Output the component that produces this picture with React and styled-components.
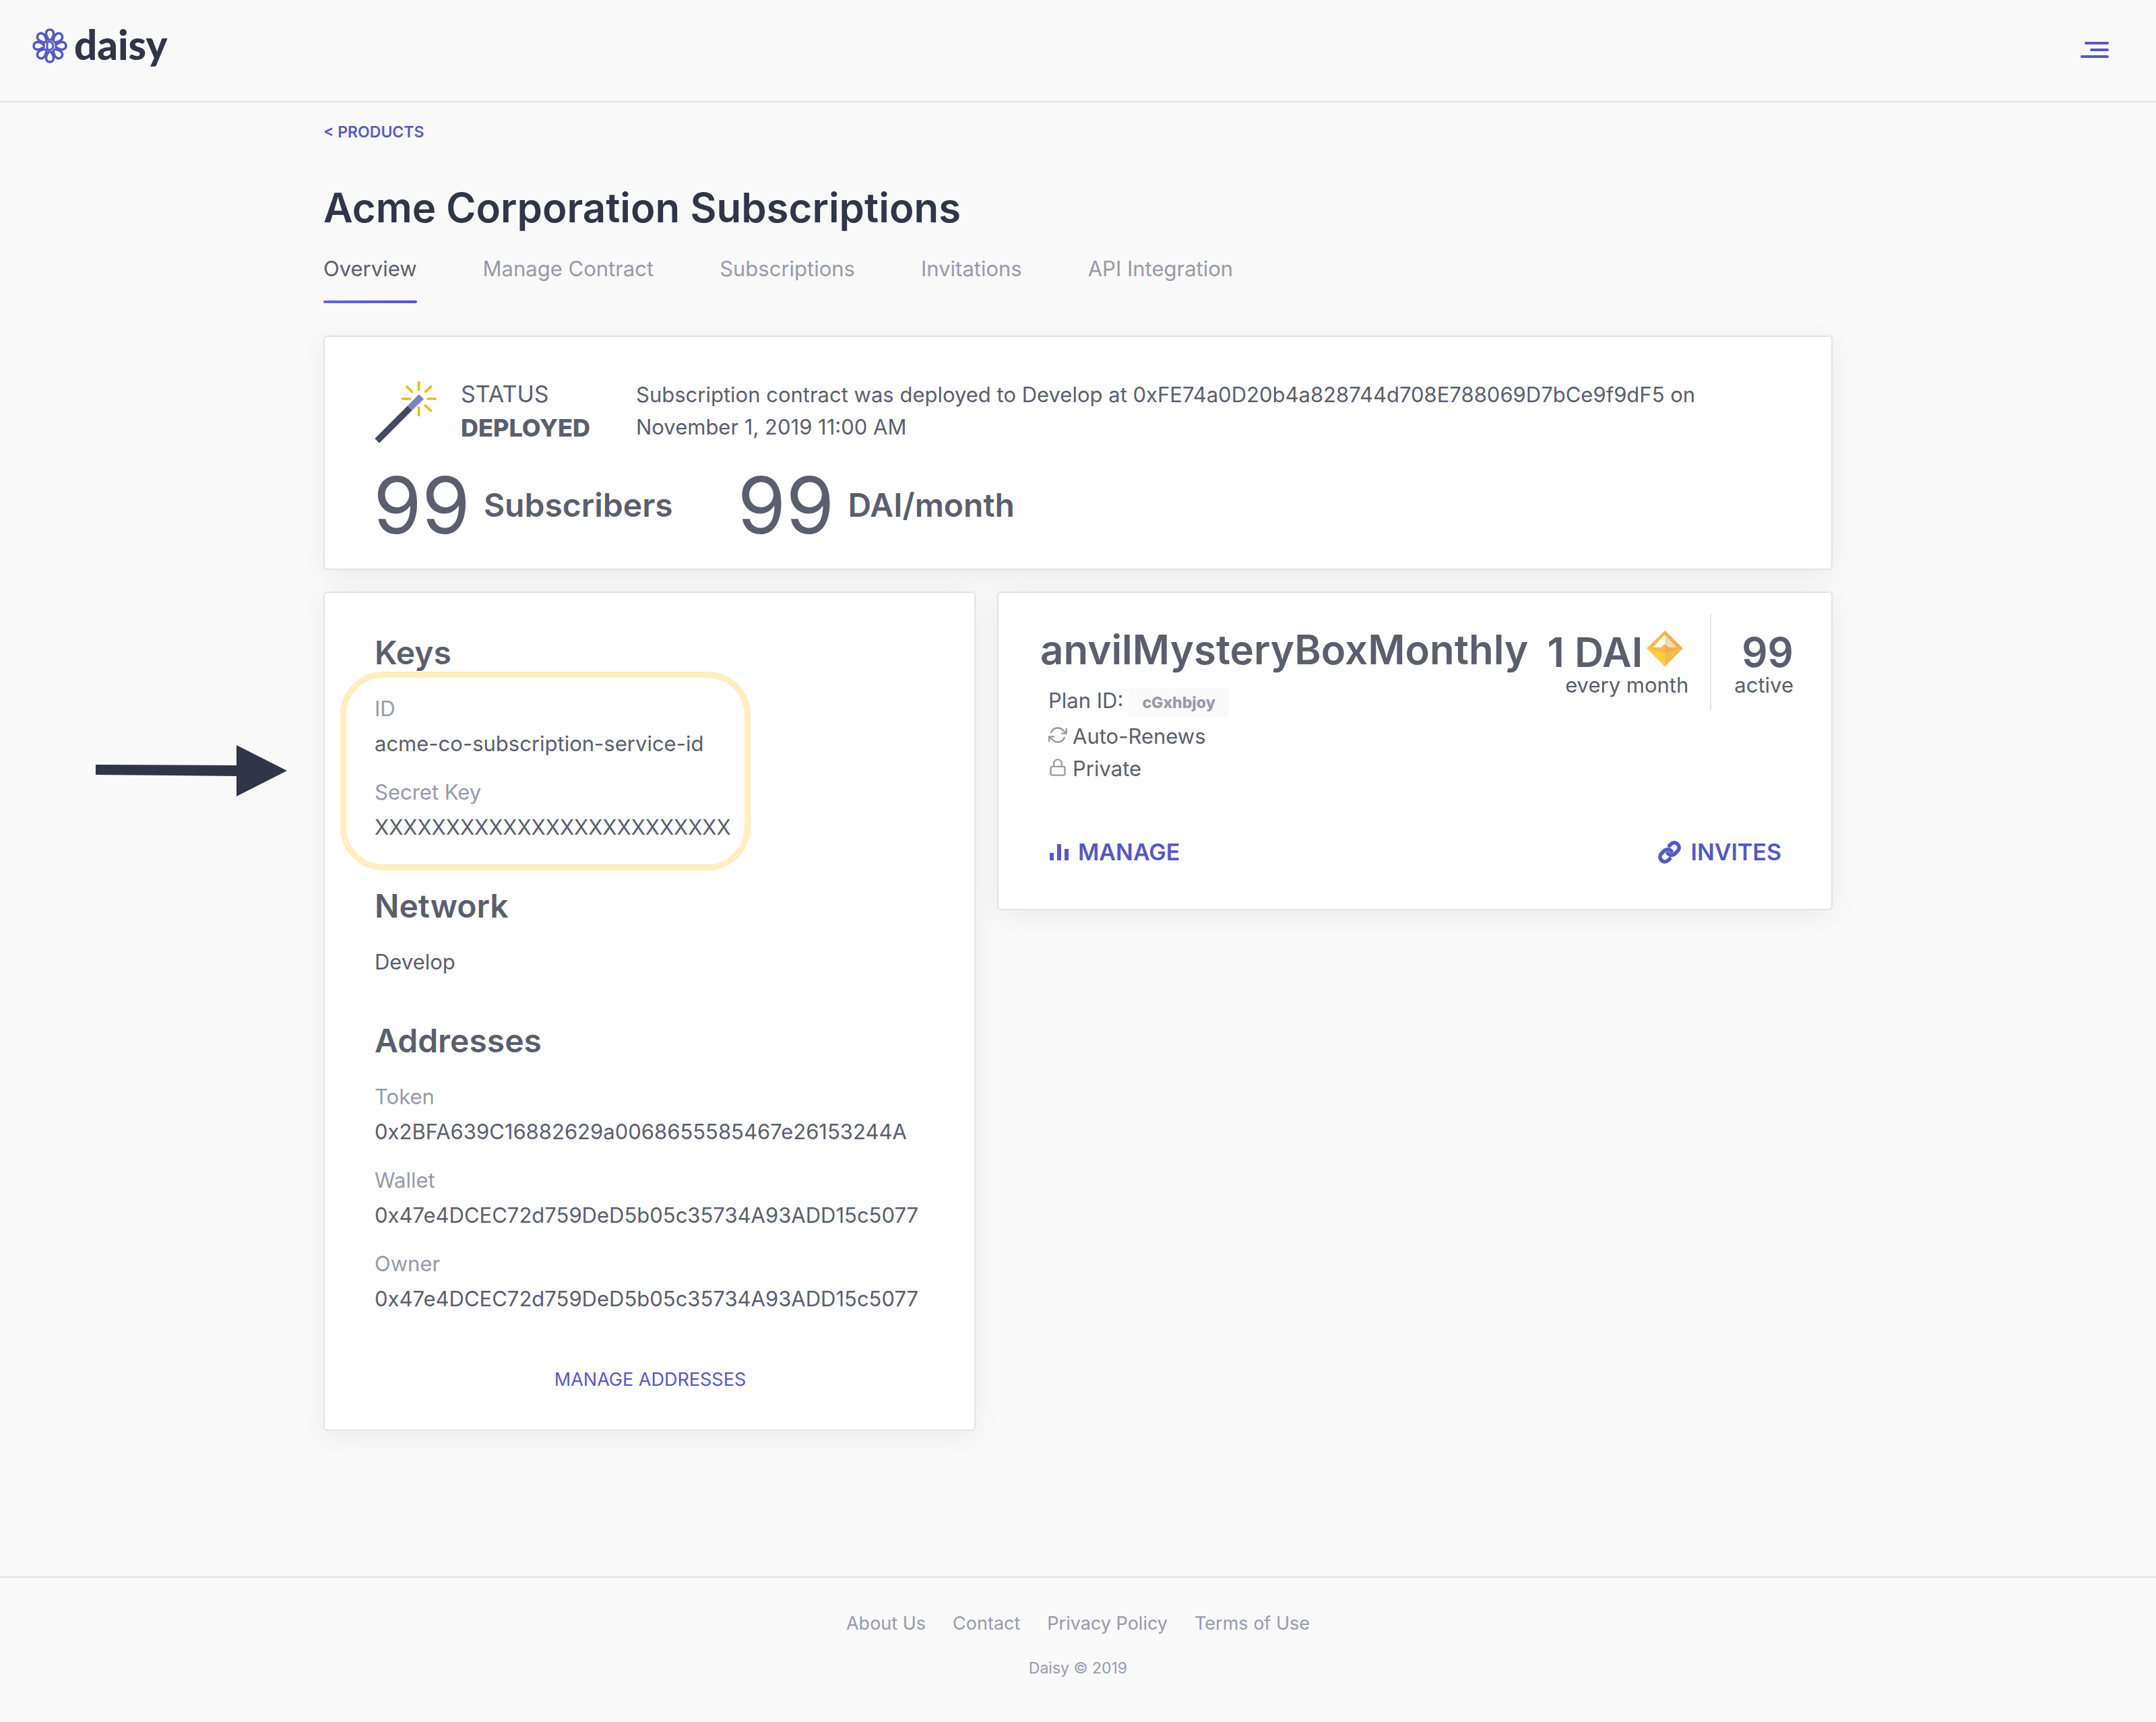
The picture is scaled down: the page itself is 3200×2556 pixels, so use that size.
import React from "react";
import styled, { createGlobalStyle } from "styled-components";
import { FiLink, FiLock, FiRefreshCw } from "react-icons/fi";

const color = {
  ink: "#303547",
  text: "#5b5e6d",
  muted: "#979aa9",
  accent: "#5459c4",
  line: "#e1e1e6",
  page: "#f9f9f9",
  highlight: "#ffedc2",
};

const GlobalStyle = createGlobalStyle`
  *, *::before, *::after { box-sizing: border-box; }
  body {
    margin: 0;
    background: ${color.page};
    color: ${color.text};
    font-family: Inter, "Liberation Sans", sans-serif;
    font-size: 31px;
    line-height: 48px;
  }
  h1, h2, h3, p, dl, dt, dd, ul { margin: 0; padding: 0; }
  ul { list-style: none; }
  a { color: inherit; text-decoration: none; }
  svg { display: block; flex: none; }
`;

const Page = styled.div`
  display: flex;
  flex-direction: column;
  min-height: 100vh;
`;

const Header = styled.header`
  display: flex;
  justify-content: space-between;
  align-items: flex-end;
  padding: 42px 62px 56px 48px;
  border-bottom: 2px solid ${color.line};
`;

const Logo = styled.a`
  display: flex;
  align-items: flex-start;
  gap: 10px;
  height: 52px;
`;

const LogoName = styled.span`
  color: ${color.ink};
  font: 900 60px/48px Lato, sans-serif;
`;

const LogoLetter = styled.text`
  fill: ${color.accent};
  font: 700 19px Inter, sans-serif;
  text-anchor: middle;
`;

const MenuButton = styled.button`
  padding: 8px;
  border: 0;
  background: none;
  color: ${color.accent};
  cursor: pointer;
`;

const Main = styled.main`
  flex: 1;
  width: 100%;
  max-width: 2240px;
  margin: 0 auto;
  padding: 30px 0 96px;
`;

const BackLink = styled.a`
  display: block;
  width: fit-content;
  color: ${color.accent};
  font-size: 23px;
  font-weight: 600;
  line-height: 28px;
`;

const PageTitle = styled.h1`
  margin-top: 62px;
  color: ${color.ink};
  font-size: 60px;
  font-weight: 600;
  line-height: 72px;
`;

const Tabs = styled.nav`
  display: flex;
  gap: 98px;
  margin: 34px 0 48px;
`;

const Tab = styled.a`
  color: ${(p) => (p.$active ? color.text : color.muted)};
  line-height: 42px;

  &::after {
    content: "";
    display: block;
    height: 4px;
    margin-top: 26px;
    border-radius: 2px;
    background: ${(p) => (p.$active ? "linear-gradient(90deg, #5f67dc, #5056bf)" : "none")};
  }
`;

const Card = styled.section`
  border: 2px solid ${color.line};
  border-radius: 6px;
  background: #fff;
  box-shadow: 0 8px 40px rgba(0, 0, 0, 0.06);
`;

const StatusCard = styled(Card)`
  padding: 60px 72px 34px;
`;

const StatusRow = styled.div`
  display: flex;
  align-items: center;
  gap: 34px;
`;

const Status = styled.p`
  flex: none;
  min-width: 226px;
  font-size: 34px;
  line-height: 50px;
`;

const StatusValue = styled.strong`
  display: block;
  font-size: 36px;
  font-weight: 800;
`;

const Stats = styled.div`
  display: flex;
  gap: 96px;
  margin-top: 30px;
`;

const Stat = styled.p`
  display: flex;
  align-items: center;
  gap: 20px;
  font-size: 48px;
  font-weight: 600;
`;

const StatNumber = styled.span`
  font-size: 116px;
  font-weight: 400;
  line-height: 120px;
`;

const Columns = styled.div`
  display: grid;
  grid-template-columns: 121fr 155fr;
  gap: 32px;
  align-items: start;
  margin-top: 32px;
`;

const DetailsCard = styled(Card)`
  display: grid;
  gap: 62px;
  padding: 60px 72px 54px 74px;
`;

const DetailsTitle = styled.h2`
  margin-bottom: 28px;
  font-size: 48px;
  font-weight: 600;
  line-height: 58px;
`;

const Details = styled.dl`
  display: grid;
  gap: 20px;
  line-height: 52px;
`;

const Term = styled.dt`
  color: ${color.muted};
`;

const Value = styled.dd`
  overflow-wrap: anywhere;
`;

const CardLink = styled.a`
  display: block;
  width: fit-content;
  margin: 74px auto 0;
  color: ${color.accent};
  font-size: 27px;
  line-height: 40px;
`;

const Callout = styled.div`
  position: relative;

  &::before {
    content: "";
    position: absolute;
    top: -29px;
    bottom: -38px;
    left: -51px;
    width: 609px;
    border: 9px solid ${color.highlight};
    border-radius: 64px;
    pointer-events: none;
  }
`;

const CalloutArrow = styled.svg`
  position: absolute;
  top: 80px;
  left: -414px;
`;

const PlanCard = styled(Card)`
  padding: 32px 56px 60px 62px;
`;

const PlanTop = styled.div`
  display: flex;
  justify-content: space-between;
  align-items: flex-start;
`;

const PlanName = styled.h2`
  margin: 16px 0 18px;
  font-size: 60px;
  font-weight: 600;
  line-height: 72px;
`;

const PlanId = styled.p`
  display: flex;
  align-items: baseline;
  gap: 8px;
  padding-left: 12px;
  line-height: 44px;
`;

const Badge = styled.code`
  padding: 0 20px;
  border-radius: 4px;
  background: ${color.page};
  color: ${color.muted};
  font: 800 23px/44px Inter, sans-serif;
`;

const Traits = styled.ul`
  margin-top: 4px;
  padding-left: 12px;
`;

const Trait = styled.li`
  display: flex;
  align-items: center;
  gap: 8px;

  svg {
    margin-bottom: 4px;
    color: ${color.muted};
  }
`;

const Figures = styled.div`
  display: flex;
  text-align: right;
`;

const Figure = styled.div`
  padding: 24px 0 20px;
  line-height: 34px;

  & + & {
    margin-left: 32px;
    padding-left: 34px;
    border-left: 2px solid ${color.line};
  }
`;

const FigureValue = styled.div`
  display: flex;
  justify-content: flex-end;
  gap: 6px;
  font-size: 60px;
  font-weight: 600;
  line-height: 64px;

  svg {
    margin-right: 8px;
  }
`;

const PlanActions = styled.div`
  display: flex;
  justify-content: space-between;
  margin-top: 76px;
  padding: 0 18px 0 14px;
`;

const PlanAction = styled.a`
  display: flex;
  align-items: center;
  gap: 14px;
  color: ${color.accent};
  font-size: 34px;
  font-weight: 600;
`;

const Footer = styled.footer`
  padding: 48px 0 64px;
  border-top: 2px solid ${color.line};
  color: ${color.muted};
  text-align: center;
`;

const FooterLinks = styled.nav`
  display: flex;
  justify-content: center;
  gap: 40px;
  font-size: 27px;
  line-height: 40px;
`;

const Copyright = styled.p`
  margin-top: 30px;
  font-size: 23px;
  line-height: 32px;
`;

const petals = [0, 45, 90, 135, 180, 225, 270, 315];

const DaisyMark = () => (
  <svg width="52" height="52" viewBox="-26 -26 52 52" aria-hidden="true">
    {petals.map((angle) => (
      <path
        key={angle}
        d="M0 -7C-3.6 -11 -5.6 -14 -5.6 -18C-5.6 -21.8 -3.2 -24 0 -24C3.2 -24 5.6 -21.8 5.6 -18C5.6 -14 3.6 -11 0 -7Z"
        fill="none"
        stroke={color.accent}
        strokeWidth="3.6"
        strokeLinejoin="round"
        transform={`rotate(${angle})`}
      />
    ))}
    <circle r="7.5" fill={color.page} />
    <LogoLetter x="0" y="7">D</LogoLetter>
  </svg>
);

const MenuIcon = () => (
  <svg width="42" height="24" viewBox="0 0 42 24" fill="currentColor" aria-hidden="true">
    <rect x="6" y="0" width="36" height="4" rx="2" />
    <rect x="14" y="10" width="28" height="4" rx="2" />
    <rect x="0" y="20" width="42" height="4" rx="2" />
  </svg>
);

const WandIcon = () => (
  <svg width="96" height="96" viewBox="0 0 96 96" aria-hidden="true">
    <path d="M51 40.3L57.7 47L9 95.7L2.3 89Z" fill="#434a5f" />
    <path d="M67.7 23.3L75 30.3L57.7 47L51 40.3Z" fill="#7985c2" />
    <path
      d="M67.7 5.5V17M67.7 43V54.5M43.3 30H54.7M81 30H92.3M50 12L57.5 19.6M85.5 12L77.5 19.6M77.5 40L85.5 47.8"
      fill="none"
      stroke="#efb810"
      strokeWidth="3.6"
      strokeLinecap="round"
    />
  </svg>
);

const DaiIcon = () => (
  <svg width="54" height="54" viewBox="0 0 54 54" aria-hidden="true">
    <path d="M27 0L0 26.5L27 35Z" fill="#feb941" />
    <path d="M27 0L54 26.5L27 35Z" fill="#efb045" />
    <path d="M0 26.5L27 35V53.5Z" fill="#ffce45" />
    <path d="M54 26.5L27 35V53.5Z" fill="#efbd48" />
    <path d="M27 6L9.6 25H21L27 20Z" fill="#fff" />
    <path d="M27 6L45 25H33L27 20Z" fill="#f1dcbb" />
  </svg>
);

const ChartIcon = () => (
  <svg width="28" height="24" viewBox="0 0 28 24" fill="currentColor" aria-hidden="true">
    <rect x="0" y="13" width="6" height="11" />
    <rect x="11" y="0" width="6" height="24" />
    <rect x="22" y="7" width="6" height="17" />
  </svg>
);

const tabs = ["Overview", "Manage Contract", "Subscriptions", "Invitations", "API Integration"];

const statusText =
  "Subscription contract was deployed to Develop at 0xFE74a0D20b4a828744d708E788069D7bCe9f9dF5 on November 1, 2019 11:00 AM";

const keys = [
  ["ID", "acme-co-subscription-service-id"],
  ["Secret Key", "XXXXXXXXXXXXXXXXXXXXXXXXX"],
];

const addresses = [
  ["Token", "0x2BFA639C16882629a0068655585467e26153244A"],
  ["Wallet", "0x47e4DCEC72d759DeD5b05c35734A93ADD15c5077"],
  ["Owner", "0x47e4DCEC72d759DeD5b05c35734A93ADD15c5077"],
];

const footerLinks = ["About Us", "Contact", "Privacy Policy", "Terms of Use"];

const DetailList = ({ items }) => (
  <Details>
    {items.map(([term, value]) => (
      <div key={term}>
        <Term>{term}</Term>
        <Value>{value}</Value>
      </div>
    ))}
  </Details>
);

export default function App() {
  return (
    <Page>
      <GlobalStyle />
      <Header>
        <Logo href="#home">
          <DaisyMark />
          <LogoName>daisy</LogoName>
        </Logo>
        <MenuButton type="button" aria-label="Menu">
          <MenuIcon />
        </MenuButton>
      </Header>

      <Main>
        <BackLink href="#products">&lt; PRODUCTS</BackLink>
        <PageTitle>Acme Corporation Subscriptions</PageTitle>
        <Tabs>
          {tabs.map((name, i) => (
            <Tab key={name} href="#tab" $active={i === 0} aria-current={i === 0 ? "page" : undefined}>
              {name}
            </Tab>
          ))}
        </Tabs>

        <StatusCard>
          <StatusRow>
            <WandIcon />
            <Status>
              STATUS
              <StatusValue>DEPLOYED</StatusValue>
            </Status>
            <p>{statusText}</p>
          </StatusRow>
          <Stats>
            <Stat>
              <StatNumber>99</StatNumber>
              Subscribers
            </Stat>
            <Stat>
              <StatNumber>99</StatNumber>
              DAI/month
            </Stat>
          </Stats>
        </StatusCard>

        <Columns>
          <DetailsCard>
            <div>
              <DetailsTitle>Keys</DetailsTitle>
              <Callout>
                <DetailList items={keys} />
                <CalloutArrow width="284" height="76" viewBox="0 0 284 76" fill={color.ink} aria-hidden="true">
                  <path d="M0 29L209 30V0L284 38L209 76V46L0 44Z" />
                </CalloutArrow>
              </Callout>
            </div>
            <div>
              <DetailsTitle>Network</DetailsTitle>
              <Details as="p">Develop</Details>
            </div>
            <div>
              <DetailsTitle>Addresses</DetailsTitle>
              <DetailList items={addresses} />
              <CardLink href="#addresses">MANAGE ADDRESSES</CardLink>
            </div>
          </DetailsCard>

          <PlanCard>
            <PlanTop>
              <div>
                <PlanName>anvilMysteryBoxMonthly</PlanName>
                <PlanId>
                  Plan ID: <Badge>cGxhbjoy</Badge>
                </PlanId>
                <Traits>
                  <Trait>
                    <FiRefreshCw size={28} />
                    Auto-Renews
                  </Trait>
                  <Trait>
                    <FiLock size={28} />
                    Private
                  </Trait>
                </Traits>
              </div>
              <Figures>
                <Figure>
                  <FigureValue>
                    1 DAI
                    <DaiIcon />
                  </FigureValue>
                  every month
                </Figure>
                <Figure>
                  <FigureValue>99</FigureValue>
                  active
                </Figure>
              </Figures>
            </PlanTop>
            <PlanActions>
              <PlanAction href="#manage">
                <ChartIcon />
                MANAGE
              </PlanAction>
              <PlanAction href="#invites">
                <FiLink size={34} strokeWidth={4} />
                INVITES
              </PlanAction>
            </PlanActions>
          </PlanCard>
        </Columns>
      </Main>

      <Footer>
        <FooterLinks>
          {footerLinks.map((name) => (
            <a key={name} href="#footer">
              {name}
            </a>
          ))}
        </FooterLinks>
        <Copyright>Daisy © 2019</Copyright>
      </Footer>
    </Page>
  );
}
